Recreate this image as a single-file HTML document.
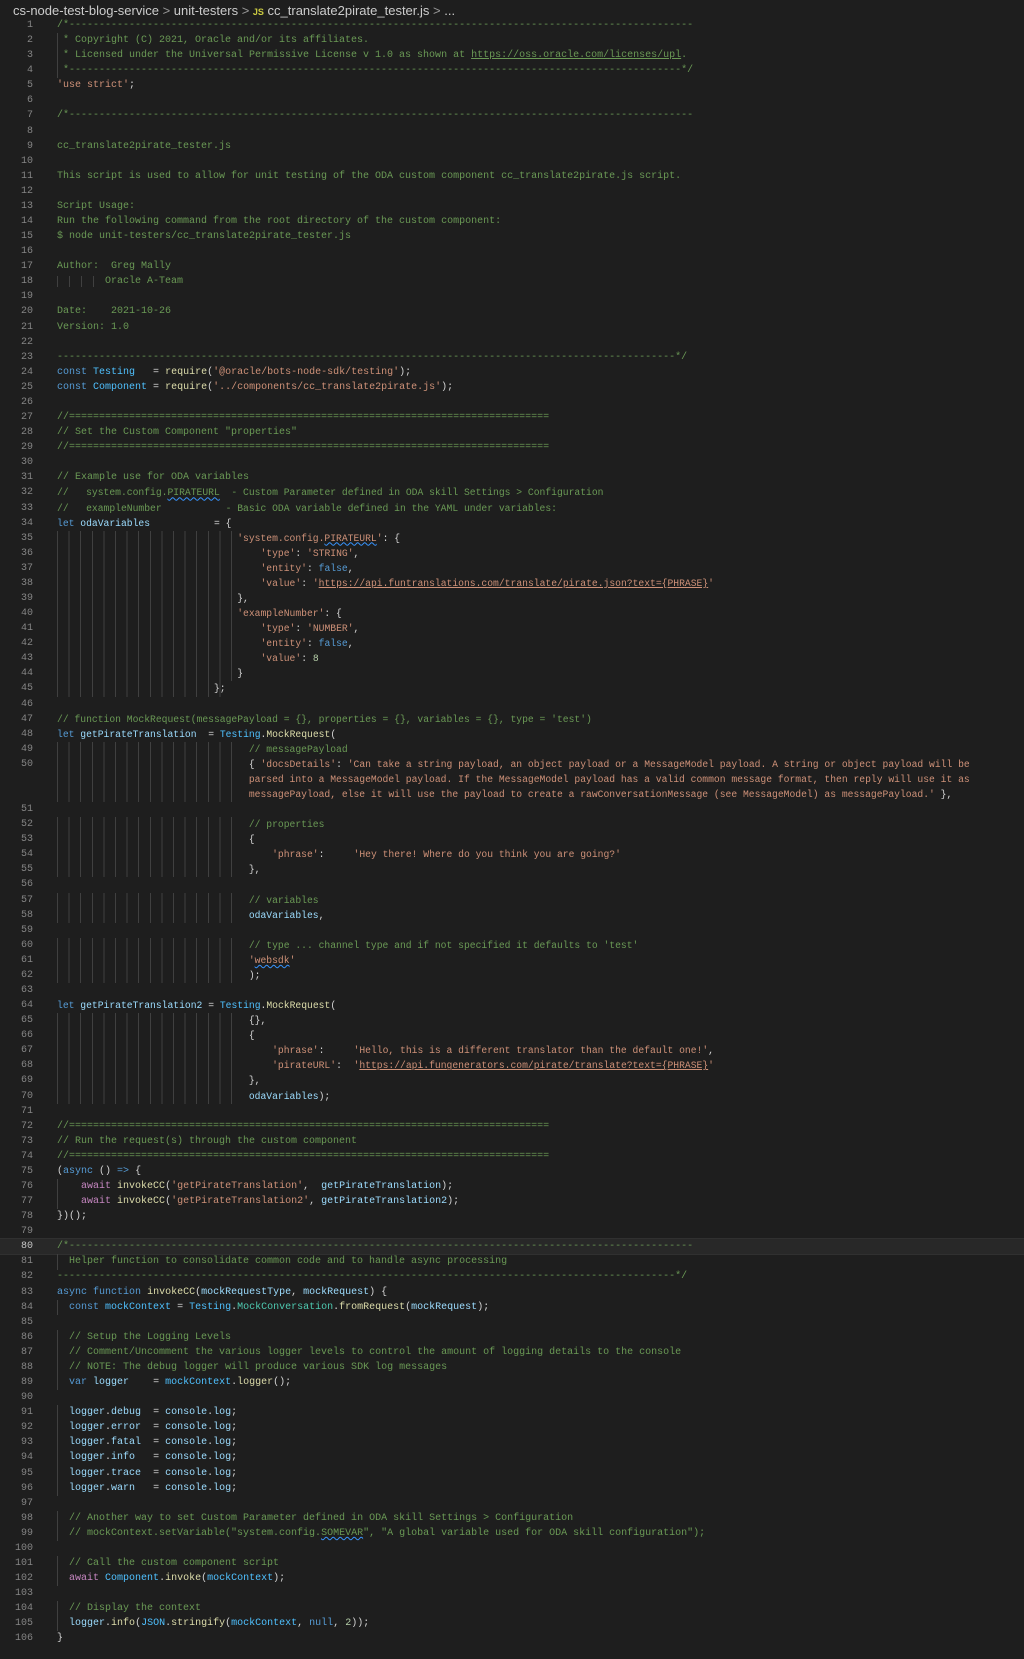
<!DOCTYPE html>
<html><head><meta charset="utf-8"><style>
body{margin:0;background:#1e1e1e;width:1024px;height:1659px;overflow:hidden;font-family:"Liberation Mono",monospace;}
.bc{position:absolute;top:3px;left:13px;font:13px "Liberation Sans",sans-serif;color:#cccccc;white-space:pre;}
.bc .js{color:#cbcb41;font-weight:bold;font-size:9px;}
.code{position:absolute;top:18px;left:0;width:1024px;}
.r{position:relative;height:15.09px;line-height:15.09px;font-size:10px;white-space:pre;color:#d4d4d4;}
.m .r{font-size:9.7px;}
.r .n{position:absolute;left:0;width:33px;text-align:right;color:#858585;font-size:10px;}
.r .x{position:absolute;left:57px;}
.g{background:repeating-linear-gradient(90deg,#404040 0 1px,transparent 1px 11.6px) 0 0/180px 100% no-repeat;}
.g2{background:repeating-linear-gradient(90deg,#404040 0 1px,transparent 1px 11.6px) 0 0/1px 100% no-repeat;}
.cur{background:#282828;outline:1px solid #303030;}
.cur .n{color:#c6c6c6;}
.c{color:#6a9955}.s{color:#ce9178}.k{color:#569cd6}.v{color:#9cdcfe}.C{color:#4fc1ff}.f{color:#dcdcaa}.p{color:#c586c0}.nm{color:#b5cea8}.t{color:#4ec9b0}
.u{text-decoration:underline}
.w{text-decoration:underline wavy #3794ff}
</style></head><body>
<div class="bc">cs-node-test-blog-service <span style="color:#999">&gt;</span> unit-testers <span style="color:#999">&gt;</span> <span class="js">JS</span> cc_translate2pirate_tester.js <span style="color:#999">&gt;</span> ...</div>
<div class="code">
<div class="r"><span class="n">1</span><span class="x c">/*--------------------------------------------------------------------------------------------------------</span></div>
<div class="r"><span class="n">2</span><span class="x c g2"> * Copyright (C) 2021, Oracle and/or its affiliates.</span></div>
<div class="r"><span class="n">3</span><span class="x c g2"> * Licensed under the Universal Permissive License v 1.0 as shown at <span class="u">https://oss.oracle.com/licenses/upl</span>.</span></div>
<div class="r"><span class="n">4</span><span class="x c g2"> *------------------------------------------------------------------------------------------------------*/</span></div>
<div class="r"><span class="n">5</span><span class="x"><span class="s">'use strict'</span>;</span></div>
<div class="r"><span class="n">6</span><span class="x"></span></div>
<div class="r"><span class="n">7</span><span class="x c">/*--------------------------------------------------------------------------------------------------------</span></div>
<div class="r"><span class="n">8</span><span class="x c"></span></div>
<div class="r"><span class="n">9</span><span class="x c">cc_translate2pirate_tester.js</span></div>
<div class="r"><span class="n">10</span><span class="x c"></span></div>
<div class="r"><span class="n">11</span><span class="x c">This script is used to allow for unit testing of the ODA custom component cc_translate2pirate.js script.</span></div>
<div class="r"><span class="n">12</span><span class="x c"></span></div>
<div class="r"><span class="n">13</span><span class="x c">Script Usage:</span></div>
<div class="r"><span class="n">14</span><span class="x c">Run the following command from the root directory of the custom component:</span></div>
<div class="r"><span class="n">15</span><span class="x c">$ node unit-testers/cc_translate2pirate_tester.js</span></div>
<div class="r"><span class="n">16</span><span class="x c"></span></div>
<div class="r"><span class="n">17</span><span class="x c">Author:  Greg Mally</span></div>
<div class="r"><span class="n">18</span><span class="x c"><span style="background:repeating-linear-gradient(90deg,#404040 0 1px,transparent 1px 12px)">        </span>Oracle A-Team</span></div>
<div class="r"><span class="n">19</span><span class="x c"></span></div>
<div class="r"><span class="n">20</span><span class="x c">Date:    2021-10-26</span></div>
<div class="r"><span class="n">21</span><span class="x c">Version: 1.0</span></div>
<div class="r"><span class="n">22</span><span class="x c"></span></div>
<div class="r"><span class="n">23</span><span class="x c">-------------------------------------------------------------------------------------------------------*/</span></div>
<div class="r"><span class="n">24</span><span class="x"><span class="k">const</span> <span class="C">Testing</span>   = <span class="f">require</span>(<span class="s">'@oracle/bots-node-sdk/testing'</span>);</span></div>
<div class="r"><span class="n">25</span><span class="x"><span class="k">const</span> <span class="C">Component</span> = <span class="f">require</span>(<span class="s">'../components/cc_translate2pirate.js'</span>);</span></div>
<div class="r"><span class="n">26</span><span class="x"></span></div>
<div class="r"><span class="n">27</span><span class="x c">//================================================================================</span></div>
<div class="r"><span class="n">28</span><span class="x c">// Set the Custom Component "properties"</span></div>
<div class="r"><span class="n">29</span><span class="x c">//================================================================================</span></div>
<div class="r"><span class="n">30</span><span class="x"></span></div>
<div class="r"><span class="n">31</span><span class="x c">// Example use for ODA variables</span></div>
<div class="m">
<div class="r"><span class="n">32</span><span class="x c">//   system.config.<span class="w">PIRATEURL</span>  - Custom Parameter defined in ODA skill Settings &gt; Configuration</span></div>
<div class="r"><span class="n">33</span><span class="x c">//   exampleNumber           - Basic ODA variable defined in the YAML under variables:</span></div>
<div class="r"><span class="n">34</span><span class="x"><span class="k">let</span> <span class="v">odaVariables</span>           = {</span></div>
<div class="r"><span class="n">35</span><span class="x g">                               <span class="s">'system.config.<span class="w">PIRATEURL</span>'</span>: {</span></div>
<div class="r"><span class="n">36</span><span class="x g">                                   <span class="s">'type'</span>: <span class="s">'STRING'</span>,</span></div>
<div class="r"><span class="n">37</span><span class="x g">                                   <span class="s">'entity'</span>: <span class="k">false</span>,</span></div>
<div class="r"><span class="n">38</span><span class="x g">                                   <span class="s">'value'</span>: <span class="s">'<span class="u">https://api.funtranslations.com/translate/pirate.json?text={PHRASE}</span>'</span></span></div>
<div class="r"><span class="n">39</span><span class="x g">                               },</span></div>
<div class="r"><span class="n">40</span><span class="x g">                               <span class="s">'exampleNumber'</span>: {</span></div>
<div class="r"><span class="n">41</span><span class="x g">                                   <span class="s">'type'</span>: <span class="s">'NUMBER'</span>,</span></div>
<div class="r"><span class="n">42</span><span class="x g">                                   <span class="s">'entity'</span>: <span class="k">false</span>,</span></div>
<div class="r"><span class="n">43</span><span class="x g">                                   <span class="s">'value'</span>: <span class="nm">8</span></span></div>
<div class="r"><span class="n">44</span><span class="x g">                               }</span></div>
<div class="r"><span class="n">45</span><span class="x g">                           };</span></div>
<div class="r"><span class="n">46</span><span class="x g2"></span></div>
<div class="r"><span class="n">47</span><span class="x c">// function MockRequest(messagePayload = {}, properties = {}, variables = {}, type = 'test')</span></div>
<div class="r"><span class="n">48</span><span class="x"><span class="k">let</span> <span class="v">getPirateTranslation</span>  = <span class="C">Testing</span>.<span class="f">MockRequest</span>(</span></div>
<div class="r"><span class="n">49</span><span class="x g">                                 <span class="c">// messagePayload</span></span></div>
<div class="r"><span class="n">50</span><span class="x g">                                 { <span class="s">'docsDetails'</span>: <span class="s">'Can take a string payload, an object payload or a MessageModel payload. A string or object payload will be</span></span></div>
<div class="r"><span class="n"></span><span class="x g">                                 <span class="s">parsed into a MessageModel payload. If the MessageModel payload has a valid common message format, then reply will use it as</span></span></div>
<div class="r"><span class="n"></span><span class="x g">                                 <span class="s">messagePayload, else it will use the payload to create a rawConversationMessage (see MessageModel) as messagePayload.'</span> },</span></div>
<div class="r"><span class="n">51</span><span class="x g"></span></div>
<div class="r"><span class="n">52</span><span class="x g">                                 <span class="c">// properties</span></span></div>
<div class="r"><span class="n">53</span><span class="x g">                                 {</span></div>
<div class="r"><span class="n">54</span><span class="x g">                                     <span class="s">'phrase'</span>:     <span class="s">'Hey there! Where do you think you are going?'</span></span></div>
<div class="r"><span class="n">55</span><span class="x g">                                 },</span></div>
<div class="r"><span class="n">56</span><span class="x g"></span></div>
<div class="r"><span class="n">57</span><span class="x g">                                 <span class="c">// variables</span></span></div>
<div class="r"><span class="n">58</span><span class="x g">                                 <span class="v">odaVariables</span>,</span></div>
<div class="r"><span class="n">59</span><span class="x g"></span></div>
<div class="r"><span class="n">60</span><span class="x g">                                 <span class="c">// type ... channel type and if not specified it defaults to 'test'</span></span></div>
<div class="r"><span class="n">61</span><span class="x g">                                 <span class="s">'<span class="w">websdk</span>'</span></span></div>
<div class="r"><span class="n">62</span><span class="x g">                                 );</span></div>
<div class="r"><span class="n">63</span><span class="x g2"></span></div>
<div class="r"><span class="n">64</span><span class="x"><span class="k">let</span> <span class="v">getPirateTranslation2</span> = <span class="C">Testing</span>.<span class="f">MockRequest</span>(</span></div>
<div class="r"><span class="n">65</span><span class="x g">                                 {},</span></div>
<div class="r"><span class="n">66</span><span class="x g">                                 {</span></div>
<div class="r"><span class="n">67</span><span class="x g">                                     <span class="s">'phrase'</span>:     <span class="s">'Hello, this is a different translator than the default one!'</span>,</span></div>
<div class="r"><span class="n">68</span><span class="x g">                                     <span class="s">'pirateURL'</span>:  <span class="s">'<span class="u">https://api.fungenerators.com/pirate/translate?text={PHRASE}</span>'</span></span></div>
<div class="r"><span class="n">69</span><span class="x g">                                 },</span></div>
<div class="r"><span class="n">70</span><span class="x g">                                 <span class="v">odaVariables</span>);</span></div>
</div>
<div class="r"><span class="n">71</span><span class="x g2"></span></div>
<div class="r"><span class="n">72</span><span class="x c">//================================================================================</span></div>
<div class="r"><span class="n">73</span><span class="x c">// Run the request(s) through the custom component</span></div>
<div class="r"><span class="n">74</span><span class="x c">//================================================================================</span></div>
<div class="r"><span class="n">75</span><span class="x">(<span class="k">async</span> () <span class="k">=&gt;</span> {</span></div>
<div class="r"><span class="n">76</span><span class="x g2">    <span class="p">await</span> <span class="f">invokeCC</span>(<span class="s">'getPirateTranslation'</span>,  <span class="v">getPirateTranslation</span>);</span></div>
<div class="r"><span class="n">77</span><span class="x g2">    <span class="p">await</span> <span class="f">invokeCC</span>(<span class="s">'getPirateTranslation2'</span>, <span class="v">getPirateTranslation2</span>);</span></div>
<div class="r"><span class="n">78</span><span class="x">})();</span></div>
<div class="r"><span class="n">79</span><span class="x"></span></div>
<div class="r cur"><span class="n">80</span><span class="x c">/*--------------------------------------------------------------------------------------------------------</span></div>
<div class="r"><span class="n">81</span><span class="x c g2">  Helper function to consolidate common code and to handle async processing</span></div>
<div class="r"><span class="n">82</span><span class="x c">-------------------------------------------------------------------------------------------------------*/</span></div>
<div class="r"><span class="n">83</span><span class="x"><span class="k">async</span> <span class="k">function</span> <span class="f">invokeCC</span>(<span class="v">mockRequestType</span>, <span class="v">mockRequest</span>) {</span></div>
<div class="r"><span class="n">84</span><span class="x g2">  <span class="k">const</span> <span class="C">mockContext</span> = <span class="C">Testing</span>.<span class="t">MockConversation</span>.<span class="f">fromRequest</span>(<span class="v">mockRequest</span>);</span></div>
<div class="r"><span class="n">85</span><span class="x g2"></span></div>
<div class="r"><span class="n">86</span><span class="x g2">  <span class="c">// Setup the Logging Levels</span></span></div>
<div class="r"><span class="n">87</span><span class="x g2">  <span class="c">// Comment/Uncomment the various logger levels to control the amount of logging details to the console</span></span></div>
<div class="r"><span class="n">88</span><span class="x g2">  <span class="c">// NOTE: The debug logger will produce various SDK log messages</span></span></div>
<div class="r"><span class="n">89</span><span class="x g2">  <span class="k">var</span> <span class="v">logger</span>    = <span class="C">mockContext</span>.<span class="f">logger</span>();</span></div>
<div class="r"><span class="n">90</span><span class="x g2"></span></div>
<div class="r"><span class="n">91</span><span class="x g2">  <span class="v">logger</span>.<span class="v">debug</span>  = <span class="v">console</span>.<span class="v">log</span>;</span></div>
<div class="r"><span class="n">92</span><span class="x g2">  <span class="v">logger</span>.<span class="v">error</span>  = <span class="v">console</span>.<span class="v">log</span>;</span></div>
<div class="r"><span class="n">93</span><span class="x g2">  <span class="v">logger</span>.<span class="v">fatal</span>  = <span class="v">console</span>.<span class="v">log</span>;</span></div>
<div class="r"><span class="n">94</span><span class="x g2">  <span class="v">logger</span>.<span class="v">info</span>   = <span class="v">console</span>.<span class="v">log</span>;</span></div>
<div class="r"><span class="n">95</span><span class="x g2">  <span class="v">logger</span>.<span class="v">trace</span>  = <span class="v">console</span>.<span class="v">log</span>;</span></div>
<div class="r"><span class="n">96</span><span class="x g2">  <span class="v">logger</span>.<span class="v">warn</span>   = <span class="v">console</span>.<span class="v">log</span>;</span></div>
<div class="r"><span class="n">97</span><span class="x g2"></span></div>
<div class="r"><span class="n">98</span><span class="x g2">  <span class="c">// Another way to set Custom Parameter defined in ODA skill Settings &gt; Configuration</span></span></div>
<div class="r"><span class="n">99</span><span class="x g2">  <span class="c">// mockContext.setVariable("system.config.<span class="w">SOMEVAR</span>", "A global variable used for ODA skill configuration");</span></span></div>
<div class="r"><span class="n">100</span><span class="x g2"></span></div>
<div class="r"><span class="n">101</span><span class="x g2">  <span class="c">// Call the custom component script</span></span></div>
<div class="r"><span class="n">102</span><span class="x g2">  <span class="p">await</span> <span class="C">Component</span>.<span class="f">invoke</span>(<span class="C">mockContext</span>);</span></div>
<div class="r"><span class="n">103</span><span class="x g2"></span></div>
<div class="r"><span class="n">104</span><span class="x g2">  <span class="c">// Display the context</span></span></div>
<div class="r"><span class="n">105</span><span class="x g2">  <span class="v">logger</span>.<span class="f">info</span>(<span class="C">JSON</span>.<span class="f">stringify</span>(<span class="C">mockContext</span>, <span class="k">null</span>, <span class="nm">2</span>));</span></div>
<div class="r"><span class="n">106</span><span class="x">}</span></div>
</div>
</body></html>
